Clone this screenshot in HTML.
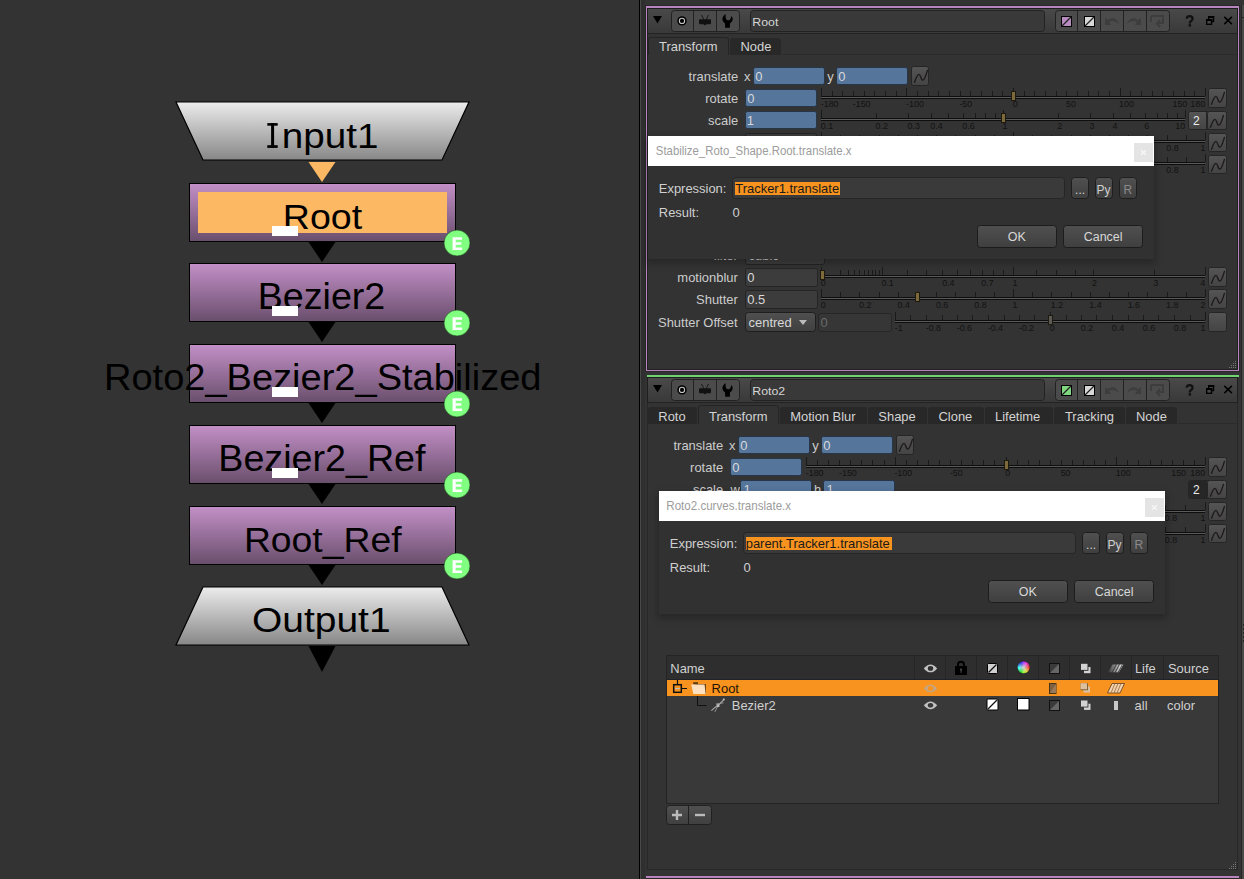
<!DOCTYPE html>
<html><head><meta charset="utf-8"><style>
html,body{margin:0;padding:0;background:#333;overflow:hidden;width:1244px;height:879px}
svg{display:block;font-family:"Liberation Sans",sans-serif}
</style></head><body>
<svg width="1244" height="879" viewBox="0 0 1244 879">
<defs>
<linearGradient id="gPurple" x1="0" y1="0" x2="0" y2="1">
<stop offset="0" stop-color="#c28fc6"/><stop offset="1" stop-color="#6a4f6d"/></linearGradient>
<linearGradient id="gGray" x1="0" y1="0" x2="0" y2="1">
<stop offset="0" stop-color="#ececec"/><stop offset="1" stop-color="#878787"/></linearGradient>
<linearGradient id="gHdr" x1="0" y1="0" x2="0" y2="1">
<stop offset="0" stop-color="#4a4a4a"/><stop offset="1" stop-color="#393939"/></linearGradient>
<linearGradient id="gBtn" x1="0" y1="0" x2="0" y2="1">
<stop offset="0" stop-color="#555"/><stop offset="1" stop-color="#444"/></linearGradient>
<linearGradient id="gBtn2" x1="0" y1="0" x2="0" y2="1">
<stop offset="0" stop-color="#505050"/><stop offset="1" stop-color="#3f3f3f"/></linearGradient>
<filter id="blur3" x="-5%" y="-15%" width="110%" height="130%"><feGaussianBlur stdDeviation="3.5"/></filter>
</defs>
<rect x="0" y="0" width="1244" height="879" fill="#333333" />
<polygon points="176,102 469,102 442,160 203,160" fill="url(#gGray)" stroke="#000" stroke-width="1.2"/>
<rect x="267.3" y="123.1" width="10.4" height="2.6" fill="#000" />
<rect x="271.1" y="123.1" width="3.0" height="24.8" fill="#000" />
<rect x="267.3" y="145.2" width="10.4" height="2.7" fill="#000" />
<text transform="translate(281.78,147.90) scale(1.0773,1)" font-size="35.90" fill="#000">nput1</text>
<polygon points="308.5,162 335.5,162 322,182" fill="#fdb863"/>
<rect x="189" y="183" width="267" height="59" fill="#000" />
<rect x="190" y="184" width="265" height="57" fill="url(#gPurple)" />
<rect x="198" y="192" width="249" height="41" fill="#fdb863" />
<rect x="189" y="263" width="267" height="59" fill="#000" />
<rect x="190" y="264" width="265" height="57" fill="url(#gPurple)" />
<rect x="189" y="344" width="267" height="59" fill="#000" />
<rect x="190" y="345" width="265" height="57" fill="url(#gPurple)" />
<rect x="189" y="425" width="267" height="59" fill="#000" />
<rect x="190" y="426" width="265" height="57" fill="url(#gPurple)" />
<rect x="189" y="506" width="267" height="59" fill="#000" />
<rect x="190" y="507" width="265" height="57" fill="url(#gPurple)" />
<text transform="translate(282.76,228.70) scale(1.0471,1)" font-size="35.90" fill="#000">Root</text>
<rect x="272" y="226" width="26" height="10" fill="#fff" />
<polygon points="308.5,242 335.5,242 322,262" fill="#000"/>
<circle cx="457" cy="243" r="13" fill="#80ff80" stroke="#1a3a1a" stroke-width="0.6"/>
<path d="M452.6,237.2 h9.4 v2.5 h-6.3 v2.6 h5.6 v2.4 h-5.6 v2.8 h6.4 v2.5 h-9.5 Z" fill="#fff"/>
<text transform="translate(257.66,308.60) scale(1.0321,1)" font-size="36.48" fill="#000">Bezier2</text>
<rect x="272" y="306" width="26" height="10" fill="#fff" />
<polygon points="308.5,322 335.5,322 322,342" fill="#000"/>
<circle cx="457" cy="323" r="13" fill="#80ff80" stroke="#1a3a1a" stroke-width="0.6"/>
<path d="M452.6,317.2 h9.4 v2.5 h-6.3 v2.6 h5.6 v2.4 h-5.6 v2.8 h6.4 v2.5 h-9.5 Z" fill="#fff"/>
<text transform="translate(104.03,390.40) scale(1.0341,1)" font-size="36.77" fill="#000">Roto2_Bezier2_Stabilized</text>
<rect x="272" y="387" width="26" height="10" fill="#fff" />
<polygon points="308.5,403 335.5,403 322,423" fill="#000"/>
<circle cx="457" cy="404" r="13" fill="#80ff80" stroke="#1a3a1a" stroke-width="0.6"/>
<path d="M452.6,398.2 h9.4 v2.5 h-6.3 v2.6 h5.6 v2.4 h-5.6 v2.8 h6.4 v2.5 h-9.5 Z" fill="#fff"/>
<text transform="translate(218.26,470.90) scale(1.0164,1)" font-size="37.06" fill="#000">Bezier2_Ref</text>
<rect x="272" y="468" width="26" height="10" fill="#fff" />
<polygon points="308.5,484 335.5,484 322,504" fill="#000"/>
<circle cx="457" cy="485" r="13" fill="#80ff80" stroke="#1a3a1a" stroke-width="0.6"/>
<path d="M452.6,479.2 h9.4 v2.5 h-6.3 v2.6 h5.6 v2.4 h-5.6 v2.8 h6.4 v2.5 h-9.5 Z" fill="#fff"/>
<text transform="translate(243.88,551.50) scale(1.0532,1)" font-size="35.47" fill="#000">Root_Ref</text>
<polygon points="308.5,565 335.5,565 322,585" fill="#000"/>
<circle cx="457" cy="566" r="13" fill="#80ff80" stroke="#1a3a1a" stroke-width="0.6"/>
<path d="M452.6,560.2 h9.4 v2.5 h-6.3 v2.6 h5.6 v2.4 h-5.6 v2.8 h6.4 v2.5 h-9.5 Z" fill="#fff"/>
<polygon points="203,587 442,587 469,645 176,645" fill="url(#gGray)" stroke="#000" stroke-width="1.2"/>
<text transform="translate(252.08,631.80) scale(1.0887,1)" font-size="35.76" fill="#000">Output1</text>
<polygon points="308.5,646 335.5,646 322,672" fill="#000"/>
<rect x="639" y="0" width="1" height="879" fill="#000" />
<rect x="640" y="0" width="1" height="879" fill="#494949" />
<rect x="641" y="0" width="4" height="879" fill="#2f2f2f" />
<rect x="1241" y="0" width="1" height="879" fill="#262626" />
<rect x="1242" y="0" width="2" height="879" fill="#4a4a4a" />
<rect x="1241" y="0" width="3" height="5" fill="#333333" />
<rect x="1242" y="17" width="2" height="1" fill="#262626" />
<rect x="1243" y="624" width="1" height="2" fill="#262626" />
<rect x="1243" y="628" width="1" height="2" fill="#262626" />
<rect x="1243" y="632" width="1" height="2" fill="#262626" />
<rect x="1243" y="636" width="1" height="2" fill="#262626" />
<rect x="1243" y="640" width="1" height="2" fill="#262626" />
<rect x="645" y="5" width="595" height="367" fill="#262726" />
<rect x="646" y="6" width="593" height="365" fill="#b784bf" />
<rect x="647" y="8" width="591" height="362" fill="#1f201f" />
<rect x="648" y="9" width="589" height="360" fill="#333333" />
<rect x="647" y="8" width="591" height="25" fill="url(#gHdr)" />
<rect x="647" y="8" width="591" height="1" fill="#1e1e1e" />
<rect x="647" y="33" width="591" height="1" fill="#232323" />
<polygon points="653,16 662,16 657.5,23.5" fill="#000"/>
<rect x="671.5" y="10.5" width="68" height="21" rx="3" fill="#4b4b4b" stroke="#222" stroke-width="1"/>
<rect x="693" y="11" width="1" height="20" fill="#222" />
<rect x="716" y="11" width="1" height="20" fill="#222" />
<circle cx="682" cy="20.9" r="4.7" fill="#000"/><circle cx="682" cy="20.9" r="2.6" fill="none" stroke="#c4c4c4" stroke-width="1.1"/>
<rect x="699" y="19.3" width="12" height="5" rx="1" fill="#111"/><path d="M701.5,15 L703.8,19.5 M708.5,15 L706.2,19.5" stroke="#111" stroke-width="0.9"/><polygon points="703.5,24 706.5,24 705,25.5" fill="#111"/>
<path d="M725.5,14.1 C723.5,15.5 722,18 722.5,20 C723,22 724.5,23 725.1,23.5 L725.1,27.8 L729.9,27.8 L729.9,23.5 C731,22.5 732.8,21 732.7,19 C732.6,17.5 732,16.5 731.3,16.2 L730.8,18 C730.5,19.5 729.5,20.3 728,20.3 C726.5,20.3 725.8,19 725.7,17.5 Z" fill="#000"/>
<rect x="750.5" y="10.5" width="294" height="21" rx="3" fill="#393939" stroke="#222222" stroke-width="1"/>
<text transform="translate(752.34,25.60) scale(1.1000,1)" font-size="11.20" fill="#d6d6d6">Root</text>
<rect x="1055.5" y="10.5" width="114" height="21" rx="3" fill="#4b4b4b" stroke="#222" stroke-width="1"/>
<rect x="1077" y="11" width="1" height="20" fill="#222" />
<rect x="1100" y="11" width="1" height="20" fill="#222" />
<rect x="1123" y="11" width="1" height="20" fill="#222" />
<rect x="1146" y="11" width="1" height="20" fill="#222" />
<rect x="1061.5" y="16.5" width="10" height="10" fill="#b78ac0" stroke="#000" stroke-width="1"/><path d="M1062,26 L1071,17" stroke="#222" stroke-width="1.2"/>
<rect x="1084.5" y="16.5" width="10" height="10" fill="#d8d8d8" stroke="#000" stroke-width="1"/><path d="M1085,26 L1094,17" stroke="#222" stroke-width="1.2"/>
<path d="M1105,25 L1105,18 L1108,20 C1112,17 1117,18 1119,24 C1116,21 1112,20 1109,22 L1111,25 Z" fill="#3d3d3d"/>
<path d="M1141,25 L1141,18 L1138,20 C1134,17 1129,18 1127,24 C1130,21 1134,20 1137,22 L1135,25 Z" fill="#3d3d3d"/>
<path d="M1151,16 L1163,16 L1163,23 L1158,23 M1160,20 L1157,23.5 L1160,27 M1151,16 L1151,22" fill="none" stroke="#3d3d3d" stroke-width="2"/>
<path d="M1186.6,18.6 C1187,16.6 1188.5,16.2 1189.6,16.2 C1191.6,16.2 1192.6,17.4 1192.6,18.8 C1192.6,20.4 1191.2,21 1190.4,21.8 C1189.9,22.3 1189.8,22.8 1189.8,23.4" fill="none" stroke="#111" stroke-width="2.2"/><rect x="1188.6" y="24.2" width="2.5" height="2.4" fill="#111"/>
<rect x="1208.7" y="16.7" width="4.8" height="4.8" fill="none" stroke="#000" stroke-width="1.4"/><rect x="1208" y="16" width="6.2" height="2" fill="#000"/><rect x="1206.7" y="19.7" width="4.8" height="4.6" fill="#474747" stroke="#000" stroke-width="1.4"/><rect x="1206" y="19" width="6.2" height="2" fill="#000"/>
<path d="M1224.3,16.9 L1231.9,24.1 M1231.9,16.9 L1224.3,24.1" stroke="#000" stroke-width="1.5"/>
<rect x="647" y="8" width="1" height="26" fill="#1e1e1e" />
<rect x="1237" y="8" width="1" height="26" fill="#1e1e1e" />
<path d="M648,55 L648,40 Q648,37 651,37 L726,37 Q729,37 729,40 L729,55 Z" fill="#333333"/>
<path d="M648.5,55 L648.5,40 Q648.5,37.5 651,37.5 L726,37.5 Q728.5,37.5 728.5,40 L728.5,55" fill="none" stroke="#242424" stroke-width="1"/>
<text transform="translate(659.00,50.80) scale(1.0800,1)" font-size="12.00" fill="#d4d4d4">Transform</text>
<path d="M730,55 L730,41 Q730,38 733,38 L778,38 Q781,38 781,41 L781,55 Z" fill="#282828"/>
<text transform="translate(740.49,51.00) scale(1.0800,1)" font-size="12.00" fill="#d4d4d4">Node</text>
<rect x="782" y="54" width="455" height="1" fill="#2b2b2b" />
<text transform="translate(688.62,81.40) scale(1.0800,1)" font-size="12.00" fill="#cccccc">translate</text>
<text transform="translate(744.00,81.40) scale(1.0800,1)" font-size="12.00" fill="#cccccc">x</text>
<rect x="753.5" y="67.5" width="71" height="17" rx="2" fill="#55759b" stroke="#263547" stroke-width="1"/>
<text transform="translate(755.20,81.00) scale(1.0800,1)" font-size="12.00" fill="#d8d8d8">0</text>
<text transform="translate(827.20,81.40) scale(1.0800,1)" font-size="12.00" fill="#cccccc">y</text>
<rect x="836.5" y="67.5" width="71" height="17" rx="2" fill="#55759b" stroke="#263547" stroke-width="1"/>
<text transform="translate(838.20,81.00) scale(1.0800,1)" font-size="12.00" fill="#d8d8d8">0</text>
<rect x="911.5" y="66.5" width="17" height="19" rx="2" fill="url(#gBtn)" stroke="#252525" stroke-width="1"/>
<path d="M914.5,82.2 C916,78 917.3,74.4 919,74.4 C920.8,74.4 921,80.2 922.6,80.2 C924.8,80.2 926.2,74.5 927.4,70.4" fill="none" stroke="#1e1a1a" stroke-width="1.4" stroke-linecap="round"/>
<text transform="translate(705.18,103.40) scale(1.0800,1)" font-size="12.00" fill="#cccccc">rotate</text>
<rect x="745.5" y="89.5" width="71" height="17" rx="2" fill="#55759b" stroke="#263547" stroke-width="1"/>
<text transform="translate(747.20,103.00) scale(1.0800,1)" font-size="12.00" fill="#d8d8d8">0</text>
<rect x="821" y="96" width="384" height="1" fill="#0e0e0e" />
<rect x="821" y="97" width="384" height="1" fill="#5a5a5a" />
<rect x="821" y="98" width="384" height="1" fill="#0e0e0e" />
<rect x="821" y="91" width="1" height="5" fill="#1a1a1a" />
<rect x="832" y="91" width="1" height="5" fill="#1a1a1a" />
<rect x="842" y="91" width="1" height="5" fill="#1a1a1a" />
<rect x="853" y="91" width="1" height="5" fill="#1a1a1a" />
<rect x="864" y="91" width="1" height="5" fill="#1a1a1a" />
<rect x="874" y="91" width="1" height="5" fill="#1a1a1a" />
<rect x="885" y="91" width="1" height="5" fill="#1a1a1a" />
<rect x="896" y="91" width="1" height="5" fill="#1a1a1a" />
<rect x="906" y="91" width="1" height="5" fill="#1a1a1a" />
<rect x="917" y="91" width="1" height="5" fill="#1a1a1a" />
<rect x="928" y="91" width="1" height="5" fill="#1a1a1a" />
<rect x="938" y="91" width="1" height="5" fill="#1a1a1a" />
<rect x="949" y="91" width="1" height="5" fill="#1a1a1a" />
<rect x="960" y="91" width="1" height="5" fill="#1a1a1a" />
<rect x="970" y="91" width="1" height="5" fill="#1a1a1a" />
<rect x="981" y="91" width="1" height="5" fill="#1a1a1a" />
<rect x="992" y="91" width="1" height="5" fill="#1a1a1a" />
<rect x="1002" y="91" width="1" height="5" fill="#1a1a1a" />
<rect x="1013" y="91" width="1" height="5" fill="#1a1a1a" />
<rect x="1024" y="91" width="1" height="5" fill="#1a1a1a" />
<rect x="1034" y="91" width="1" height="5" fill="#1a1a1a" />
<rect x="1045" y="91" width="1" height="5" fill="#1a1a1a" />
<rect x="1056" y="91" width="1" height="5" fill="#1a1a1a" />
<rect x="1066" y="91" width="1" height="5" fill="#1a1a1a" />
<rect x="1077" y="91" width="1" height="5" fill="#1a1a1a" />
<rect x="1088" y="91" width="1" height="5" fill="#1a1a1a" />
<rect x="1098" y="91" width="1" height="5" fill="#1a1a1a" />
<rect x="1109" y="91" width="1" height="5" fill="#1a1a1a" />
<rect x="1120" y="91" width="1" height="5" fill="#1a1a1a" />
<rect x="1130" y="91" width="1" height="5" fill="#1a1a1a" />
<rect x="1141" y="91" width="1" height="5" fill="#1a1a1a" />
<rect x="1152" y="91" width="1" height="5" fill="#1a1a1a" />
<rect x="1162" y="91" width="1" height="5" fill="#1a1a1a" />
<rect x="1173" y="91" width="1" height="5" fill="#1a1a1a" />
<rect x="1184" y="91" width="1" height="5" fill="#1a1a1a" />
<rect x="1194" y="91" width="1" height="5" fill="#1a1a1a" />
<rect x="1205" y="91" width="1" height="5" fill="#1a1a1a" />
<rect x="821" y="88" width="1" height="8" fill="#1a1a1a" />
<rect x="906" y="88" width="1" height="8" fill="#1a1a1a" />
<rect x="1013" y="88" width="1" height="8" fill="#1a1a1a" />
<rect x="1120" y="88" width="1" height="8" fill="#1a1a1a" />
<rect x="1205" y="88" width="1" height="8" fill="#1a1a1a" />
<text transform="translate(820.72,107.00) scale(1.0500,1)" font-size="8.50" fill="#121212">-180</text>
<text transform="translate(852.72,107.00) scale(1.0500,1)" font-size="8.50" fill="#121212">-150</text>
<text transform="translate(906.05,107.00) scale(1.0500,1)" font-size="8.50" fill="#121212">-100</text>
<text transform="translate(959.39,107.00) scale(1.0500,1)" font-size="8.50" fill="#121212">-50</text>
<text transform="translate(1012.72,107.00) scale(1.0500,1)" font-size="8.50" fill="#121212">0</text>
<text transform="translate(1066.05,107.00) scale(1.0500,1)" font-size="8.50" fill="#121212">50</text>
<text transform="translate(1119.11,107.00) scale(1.0500,1)" font-size="8.50" fill="#121212">100</text>
<text transform="translate(1172.44,107.00) scale(1.0500,1)" font-size="8.50" fill="#121212">150</text>
<text transform="translate(1190.33,107.00) scale(1.0500,1)" font-size="8.50" fill="#121212">180</text>
<rect x="1011.5" y="91.5" width="4" height="9" fill="#7d6a3a" stroke="#1e1a10" stroke-width="1"/>
<rect x="1208.5" y="88.5" width="18" height="19" rx="2" fill="url(#gBtn)" stroke="#252525" stroke-width="1"/>
<path d="M1211.5,104.2 C1213,100 1214.3,96.4 1216,96.4 C1217.8,96.4 1218,102.2 1219.6,102.2 C1221.8,102.2 1223.2,96.5 1224.4,92.4" fill="none" stroke="#1e1a1a" stroke-width="1.4" stroke-linecap="round"/>
<text transform="translate(708.07,125.40) scale(1.0800,1)" font-size="12.00" fill="#cccccc">scale</text>
<rect x="745.5" y="111.5" width="71" height="17" rx="2" fill="#55759b" stroke="#263547" stroke-width="1"/>
<text transform="translate(746.79,125.00) scale(1.0800,1)" font-size="12.00" fill="#d8d8d8">1</text>
<rect x="821" y="118" width="364" height="1" fill="#0e0e0e" />
<rect x="821" y="119" width="364" height="1" fill="#5a5a5a" />
<rect x="821" y="120" width="364" height="1" fill="#0e0e0e" />
<rect x="821" y="113" width="1" height="5" fill="#1a1a1a" />
<rect x="876" y="113" width="1" height="5" fill="#1a1a1a" />
<rect x="908" y="113" width="1" height="5" fill="#1a1a1a" />
<rect x="931" y="113" width="1" height="5" fill="#1a1a1a" />
<rect x="948" y="113" width="1" height="5" fill="#1a1a1a" />
<rect x="963" y="113" width="1" height="5" fill="#1a1a1a" />
<rect x="975" y="113" width="1" height="5" fill="#1a1a1a" />
<rect x="985" y="113" width="1" height="5" fill="#1a1a1a" />
<rect x="995" y="113" width="1" height="5" fill="#1a1a1a" />
<rect x="1003" y="113" width="1" height="5" fill="#1a1a1a" />
<rect x="1058" y="113" width="1" height="5" fill="#1a1a1a" />
<rect x="1090" y="113" width="1" height="5" fill="#1a1a1a" />
<rect x="1113" y="113" width="1" height="5" fill="#1a1a1a" />
<rect x="1130" y="113" width="1" height="5" fill="#1a1a1a" />
<rect x="1145" y="113" width="1" height="5" fill="#1a1a1a" />
<rect x="1157" y="113" width="1" height="5" fill="#1a1a1a" />
<rect x="1167" y="113" width="1" height="5" fill="#1a1a1a" />
<rect x="1177" y="113" width="1" height="5" fill="#1a1a1a" />
<rect x="1185" y="113" width="1" height="5" fill="#1a1a1a" />
<rect x="821" y="110" width="1" height="8" fill="#1a1a1a" />
<rect x="1003" y="110" width="1" height="8" fill="#1a1a1a" />
<rect x="1185" y="110" width="1" height="8" fill="#1a1a1a" />
<text transform="translate(820.72,129.00) scale(1.0500,1)" font-size="8.50" fill="#121212">0.1</text>
<text transform="translate(875.51,129.00) scale(1.0500,1)" font-size="8.50" fill="#121212">0.2</text>
<text transform="translate(907.56,129.00) scale(1.0500,1)" font-size="8.50" fill="#121212">0.3</text>
<text transform="translate(930.30,129.00) scale(1.0500,1)" font-size="8.50" fill="#121212">0.4</text>
<text transform="translate(962.34,129.00) scale(1.0500,1)" font-size="8.50" fill="#121212">0.6</text>
<text transform="translate(1002.44,129.00) scale(1.0500,1)" font-size="8.50" fill="#121212">1</text>
<text transform="translate(1057.37,129.00) scale(1.0500,1)" font-size="8.50" fill="#121212">2</text>
<text transform="translate(1089.56,129.00) scale(1.0500,1)" font-size="8.50" fill="#121212">3</text>
<text transform="translate(1112.44,129.00) scale(1.0500,1)" font-size="8.50" fill="#121212">4</text>
<text transform="translate(1144.21,129.00) scale(1.0500,1)" font-size="8.50" fill="#121212">6</text>
<text transform="translate(1175.29,129.00) scale(1.0500,1)" font-size="8.50" fill="#121212">10</text>
<rect x="1001.5" y="113.5" width="4" height="9" fill="#7d6a3a" stroke="#1e1a10" stroke-width="1"/>
<rect x="1188.5" y="111.5" width="38" height="18" rx="2" fill="url(#gBtn)" stroke="#252525" stroke-width="1"/>
<rect x="1206" y="112" width="1" height="17" fill="#252525" />
<text transform="translate(1193.04,125.20)" font-size="12.00" fill="#eeeeee">2</text>
<rect x="1207.5" y="111.5" width="19" height="18" rx="2" fill="url(#gBtn)" stroke="#252525" stroke-width="1"/>
<path d="M1210.5,127.2 C1212,123 1213.3,119.4 1215,119.4 C1216.8,119.4 1217,125.2 1218.6,125.2 C1220.8,125.2 1222.2,119.5 1223.4,115.4" fill="none" stroke="#1e1a1a" stroke-width="1.4" stroke-linecap="round"/>
<rect x="745.5" y="133.5" width="71" height="17" rx="2" fill="#3c3c3c" stroke="#242424" stroke-width="1"/>
<rect x="821" y="140" width="384" height="1" fill="#0e0e0e" />
<rect x="821" y="141" width="384" height="1" fill="#5a5a5a" />
<rect x="821" y="142" width="384" height="1" fill="#0e0e0e" />
<rect x="821" y="135" width="1" height="5" fill="#1a1a1a" />
<rect x="840" y="135" width="1" height="5" fill="#1a1a1a" />
<rect x="859" y="135" width="1" height="5" fill="#1a1a1a" />
<rect x="879" y="135" width="1" height="5" fill="#1a1a1a" />
<rect x="898" y="135" width="1" height="5" fill="#1a1a1a" />
<rect x="917" y="135" width="1" height="5" fill="#1a1a1a" />
<rect x="936" y="135" width="1" height="5" fill="#1a1a1a" />
<rect x="955" y="135" width="1" height="5" fill="#1a1a1a" />
<rect x="975" y="135" width="1" height="5" fill="#1a1a1a" />
<rect x="994" y="135" width="1" height="5" fill="#1a1a1a" />
<rect x="1013" y="135" width="1" height="5" fill="#1a1a1a" />
<rect x="1032" y="135" width="1" height="5" fill="#1a1a1a" />
<rect x="1051" y="135" width="1" height="5" fill="#1a1a1a" />
<rect x="1071" y="135" width="1" height="5" fill="#1a1a1a" />
<rect x="1090" y="135" width="1" height="5" fill="#1a1a1a" />
<rect x="1109" y="135" width="1" height="5" fill="#1a1a1a" />
<rect x="1128" y="135" width="1" height="5" fill="#1a1a1a" />
<rect x="1147" y="135" width="1" height="5" fill="#1a1a1a" />
<rect x="1167" y="135" width="1" height="5" fill="#1a1a1a" />
<rect x="1186" y="135" width="1" height="5" fill="#1a1a1a" />
<rect x="1205" y="135" width="1" height="5" fill="#1a1a1a" />
<rect x="821" y="132" width="1" height="8" fill="#1a1a1a" />
<rect x="1013" y="132" width="1" height="8" fill="#1a1a1a" />
<rect x="1205" y="132" width="1" height="8" fill="#1a1a1a" />
<text transform="translate(1166.32,151.00) scale(1.0500,1)" font-size="8.50" fill="#121212">0.8</text>
<text transform="translate(1200.40,151.00) scale(1.0500,1)" font-size="8.50" fill="#121212">1</text>
<rect x="1208.5" y="133.5" width="18" height="18" rx="2" fill="url(#gBtn)" stroke="#252525" stroke-width="1"/>
<path d="M1211.5,149.2 C1213,145 1214.3,141.4 1216,141.4 C1217.8,141.4 1218,147.2 1219.6,147.2 C1221.8,147.2 1223.2,141.5 1224.4,137.4" fill="none" stroke="#1e1a1a" stroke-width="1.4" stroke-linecap="round"/>
<rect x="821" y="162" width="384" height="1" fill="#0e0e0e" />
<rect x="821" y="163" width="384" height="1" fill="#5a5a5a" />
<rect x="821" y="164" width="384" height="1" fill="#0e0e0e" />
<rect x="821" y="157" width="1" height="5" fill="#1a1a1a" />
<rect x="840" y="157" width="1" height="5" fill="#1a1a1a" />
<rect x="859" y="157" width="1" height="5" fill="#1a1a1a" />
<rect x="879" y="157" width="1" height="5" fill="#1a1a1a" />
<rect x="898" y="157" width="1" height="5" fill="#1a1a1a" />
<rect x="917" y="157" width="1" height="5" fill="#1a1a1a" />
<rect x="936" y="157" width="1" height="5" fill="#1a1a1a" />
<rect x="955" y="157" width="1" height="5" fill="#1a1a1a" />
<rect x="975" y="157" width="1" height="5" fill="#1a1a1a" />
<rect x="994" y="157" width="1" height="5" fill="#1a1a1a" />
<rect x="1013" y="157" width="1" height="5" fill="#1a1a1a" />
<rect x="1032" y="157" width="1" height="5" fill="#1a1a1a" />
<rect x="1051" y="157" width="1" height="5" fill="#1a1a1a" />
<rect x="1071" y="157" width="1" height="5" fill="#1a1a1a" />
<rect x="1090" y="157" width="1" height="5" fill="#1a1a1a" />
<rect x="1109" y="157" width="1" height="5" fill="#1a1a1a" />
<rect x="1128" y="157" width="1" height="5" fill="#1a1a1a" />
<rect x="1147" y="157" width="1" height="5" fill="#1a1a1a" />
<rect x="1167" y="157" width="1" height="5" fill="#1a1a1a" />
<rect x="1186" y="157" width="1" height="5" fill="#1a1a1a" />
<rect x="1205" y="157" width="1" height="5" fill="#1a1a1a" />
<rect x="821" y="154" width="1" height="8" fill="#1a1a1a" />
<rect x="1013" y="154" width="1" height="8" fill="#1a1a1a" />
<rect x="1205" y="154" width="1" height="8" fill="#1a1a1a" />
<text transform="translate(1166.32,173.00) scale(1.0500,1)" font-size="8.50" fill="#121212">0.8</text>
<text transform="translate(1200.40,173.00) scale(1.0500,1)" font-size="8.50" fill="#121212">1</text>
<rect x="1208.5" y="155.5" width="18" height="18" rx="2" fill="url(#gBtn)" stroke="#252525" stroke-width="1"/>
<path d="M1211.5,171.2 C1213,167 1214.3,163.4 1216,163.4 C1217.8,163.4 1218,169.2 1219.6,169.2 C1221.8,169.2 1223.2,163.5 1224.4,159.4" fill="none" stroke="#1e1a1a" stroke-width="1.4" stroke-linecap="round"/>
<rect x="745.5" y="245.5" width="79" height="19" rx="2" fill="#3c3c3c" stroke="#242424" stroke-width="1"/>
<text transform="translate(748.60,259.80) scale(1.0800,1)" font-size="12.00" fill="#cfcfcf">cubic</text>
<text transform="translate(713.38,259.80) scale(1.0800,1)" font-size="12.00" fill="#cccccc">filter</text>
<text transform="translate(677.35,282.40) scale(1.0800,1)" font-size="12.00" fill="#cccccc">motionblur</text>
<rect x="745.5" y="268.5" width="72" height="18" rx="2" fill="#3c3c3c" stroke="#242424" stroke-width="1"/>
<text transform="translate(747.20,282.20) scale(1.0800,1)" font-size="12.00" fill="#d8d8d8">0</text>
<rect x="821" y="275" width="384" height="1" fill="#0e0e0e" />
<rect x="821" y="276" width="384" height="1" fill="#5a5a5a" />
<rect x="821" y="277" width="384" height="1" fill="#0e0e0e" />
<rect x="821" y="270" width="1" height="5" fill="#1a1a1a" />
<rect x="840" y="270" width="1" height="5" fill="#1a1a1a" />
<rect x="848" y="270" width="1" height="5" fill="#1a1a1a" />
<rect x="854" y="270" width="1" height="5" fill="#1a1a1a" />
<rect x="859" y="270" width="1" height="5" fill="#1a1a1a" />
<rect x="864" y="270" width="1" height="5" fill="#1a1a1a" />
<rect x="868" y="270" width="1" height="5" fill="#1a1a1a" />
<rect x="872" y="270" width="1" height="5" fill="#1a1a1a" />
<rect x="875" y="270" width="1" height="5" fill="#1a1a1a" />
<rect x="879" y="270" width="1" height="5" fill="#1a1a1a" />
<rect x="882" y="270" width="1" height="5" fill="#1a1a1a" />
<rect x="882" y="270" width="1" height="5" fill="#1a1a1a" />
<rect x="907" y="270" width="1" height="5" fill="#1a1a1a" />
<rect x="926" y="270" width="1" height="5" fill="#1a1a1a" />
<rect x="942" y="270" width="1" height="5" fill="#1a1a1a" />
<rect x="957" y="270" width="1" height="5" fill="#1a1a1a" />
<rect x="970" y="270" width="1" height="5" fill="#1a1a1a" />
<rect x="982" y="270" width="1" height="5" fill="#1a1a1a" />
<rect x="993" y="270" width="1" height="5" fill="#1a1a1a" />
<rect x="1003" y="270" width="1" height="5" fill="#1a1a1a" />
<rect x="1013" y="270" width="1" height="5" fill="#1a1a1a" />
<rect x="1036" y="270" width="1" height="5" fill="#1a1a1a" />
<rect x="1056" y="270" width="1" height="5" fill="#1a1a1a" />
<rect x="1075" y="270" width="1" height="5" fill="#1a1a1a" />
<rect x="1093" y="270" width="1" height="5" fill="#1a1a1a" />
<rect x="1154" y="270" width="1" height="5" fill="#1a1a1a" />
<rect x="1205" y="270" width="1" height="5" fill="#1a1a1a" />
<rect x="821" y="267" width="1" height="8" fill="#1a1a1a" />
<rect x="882" y="267" width="1" height="8" fill="#1a1a1a" />
<rect x="1013" y="267" width="1" height="8" fill="#1a1a1a" />
<rect x="1205" y="267" width="1" height="8" fill="#1a1a1a" />
<text transform="translate(820.72,286.00) scale(1.0500,1)" font-size="8.50" fill="#121212">0</text>
<text transform="translate(881.44,286.00) scale(1.0500,1)" font-size="8.50" fill="#121212">0.1</text>
<text transform="translate(942.15,286.00) scale(1.0500,1)" font-size="8.50" fill="#121212">0.4</text>
<text transform="translate(981.36,286.00) scale(1.0500,1)" font-size="8.50" fill="#121212">0.7</text>
<text transform="translate(1012.44,286.00) scale(1.0500,1)" font-size="8.50" fill="#121212">1</text>
<text transform="translate(1092.11,286.00) scale(1.0500,1)" font-size="8.50" fill="#121212">2</text>
<text transform="translate(1153.27,286.00) scale(1.0500,1)" font-size="8.50" fill="#121212">3</text>
<text transform="translate(1200.26,286.00) scale(1.0500,1)" font-size="8.50" fill="#121212">4</text>
<rect x="820.5" y="270.5" width="4" height="9" fill="#7d6a3a" stroke="#1e1a10" stroke-width="1"/>
<rect x="1208.5" y="267.5" width="18" height="19" rx="2" fill="url(#gBtn)" stroke="#252525" stroke-width="1"/>
<path d="M1211.5,283.2 C1213,279 1214.3,275.4 1216,275.4 C1217.8,275.4 1218,281.2 1219.6,281.2 C1221.8,281.2 1223.2,275.5 1224.4,271.4" fill="none" stroke="#1e1a1a" stroke-width="1.4" stroke-linecap="round"/>
<text transform="translate(696.08,304.30) scale(1.0800,1)" font-size="12.00" fill="#cccccc">Shutter</text>
<rect x="745.5" y="290.5" width="72" height="18" rx="2" fill="#3c3c3c" stroke="#242424" stroke-width="1"/>
<text transform="translate(747.20,304.20) scale(1.0800,1)" font-size="12.00" fill="#d8d8d8">0.5</text>
<rect x="821" y="297" width="384" height="1" fill="#0e0e0e" />
<rect x="821" y="298" width="384" height="1" fill="#5a5a5a" />
<rect x="821" y="299" width="384" height="1" fill="#0e0e0e" />
<rect x="821" y="292" width="1" height="5" fill="#1a1a1a" />
<rect x="840" y="292" width="1" height="5" fill="#1a1a1a" />
<rect x="859" y="292" width="1" height="5" fill="#1a1a1a" />
<rect x="879" y="292" width="1" height="5" fill="#1a1a1a" />
<rect x="898" y="292" width="1" height="5" fill="#1a1a1a" />
<rect x="917" y="292" width="1" height="5" fill="#1a1a1a" />
<rect x="936" y="292" width="1" height="5" fill="#1a1a1a" />
<rect x="955" y="292" width="1" height="5" fill="#1a1a1a" />
<rect x="975" y="292" width="1" height="5" fill="#1a1a1a" />
<rect x="994" y="292" width="1" height="5" fill="#1a1a1a" />
<rect x="1013" y="292" width="1" height="5" fill="#1a1a1a" />
<rect x="1032" y="292" width="1" height="5" fill="#1a1a1a" />
<rect x="1051" y="292" width="1" height="5" fill="#1a1a1a" />
<rect x="1071" y="292" width="1" height="5" fill="#1a1a1a" />
<rect x="1090" y="292" width="1" height="5" fill="#1a1a1a" />
<rect x="1109" y="292" width="1" height="5" fill="#1a1a1a" />
<rect x="1128" y="292" width="1" height="5" fill="#1a1a1a" />
<rect x="1147" y="292" width="1" height="5" fill="#1a1a1a" />
<rect x="1167" y="292" width="1" height="5" fill="#1a1a1a" />
<rect x="1186" y="292" width="1" height="5" fill="#1a1a1a" />
<rect x="1205" y="292" width="1" height="5" fill="#1a1a1a" />
<rect x="821" y="289" width="1" height="8" fill="#1a1a1a" />
<rect x="1013" y="289" width="1" height="8" fill="#1a1a1a" />
<rect x="1205" y="289" width="1" height="8" fill="#1a1a1a" />
<text transform="translate(820.72,308.00) scale(1.0500,1)" font-size="8.50" fill="#121212">0</text>
<text transform="translate(859.12,308.00) scale(1.0500,1)" font-size="8.50" fill="#121212">0.2</text>
<text transform="translate(897.52,308.00) scale(1.0500,1)" font-size="8.50" fill="#121212">0.4</text>
<text transform="translate(935.92,308.00) scale(1.0500,1)" font-size="8.50" fill="#121212">0.6</text>
<text transform="translate(974.32,308.00) scale(1.0500,1)" font-size="8.50" fill="#121212">0.8</text>
<text transform="translate(1012.44,308.00) scale(1.0500,1)" font-size="8.50" fill="#121212">1</text>
<text transform="translate(1050.84,308.00) scale(1.0500,1)" font-size="8.50" fill="#121212">1.2</text>
<text transform="translate(1089.24,308.00) scale(1.0500,1)" font-size="8.50" fill="#121212">1.4</text>
<text transform="translate(1127.64,308.00) scale(1.0500,1)" font-size="8.50" fill="#121212">1.6</text>
<text transform="translate(1166.04,308.00) scale(1.0500,1)" font-size="8.50" fill="#121212">1.8</text>
<text transform="translate(1200.40,308.00) scale(1.0500,1)" font-size="8.50" fill="#121212">2</text>
<rect x="915.5" y="292.5" width="4" height="9" fill="#7d6a3a" stroke="#1e1a10" stroke-width="1"/>
<rect x="1208.5" y="289.5" width="18" height="19" rx="2" fill="url(#gBtn)" stroke="#252525" stroke-width="1"/>
<path d="M1211.5,305.2 C1213,301 1214.3,297.4 1216,297.4 C1217.8,297.4 1218,303.2 1219.6,303.2 C1221.8,303.2 1223.2,297.5 1224.4,293.4" fill="none" stroke="#1e1a1a" stroke-width="1.4" stroke-linecap="round"/>
<text transform="translate(658.03,326.90) scale(1.0800,1)" font-size="12.00" fill="#cccccc">Shutter Offset</text>
<rect x="745.5" y="312.5" width="70" height="19" rx="3" fill="url(#gBtn2)" stroke="#1e1e1e" stroke-width="1"/>
<text transform="translate(748.60,326.70) scale(1.0800,1)" font-size="12.00" fill="#d8d8d8">centred</text>
<polygon points="799,320 807,320 803,325" fill="#bbbbbb"/>
<rect x="818.5" y="313.5" width="73" height="18" rx="2" fill="#363636" stroke="#262626" stroke-width="1"/>
<text transform="translate(820.60,326.70) scale(1.0800,1)" font-size="12.00" fill="#6a6a6a">0</text>
<rect x="895" y="320" width="310" height="1" fill="#0e0e0e" />
<rect x="895" y="321" width="310" height="1" fill="#5a5a5a" />
<rect x="895" y="322" width="310" height="1" fill="#0e0e0e" />
<rect x="895" y="315" width="1" height="5" fill="#1a1a1a" />
<rect x="910" y="315" width="1" height="5" fill="#1a1a1a" />
<rect x="926" y="315" width="1" height="5" fill="#1a1a1a" />
<rect x="942" y="315" width="1" height="5" fill="#1a1a1a" />
<rect x="957" y="315" width="1" height="5" fill="#1a1a1a" />
<rect x="972" y="315" width="1" height="5" fill="#1a1a1a" />
<rect x="988" y="315" width="1" height="5" fill="#1a1a1a" />
<rect x="1004" y="315" width="1" height="5" fill="#1a1a1a" />
<rect x="1019" y="315" width="1" height="5" fill="#1a1a1a" />
<rect x="1034" y="315" width="1" height="5" fill="#1a1a1a" />
<rect x="1050" y="315" width="1" height="5" fill="#1a1a1a" />
<rect x="1066" y="315" width="1" height="5" fill="#1a1a1a" />
<rect x="1081" y="315" width="1" height="5" fill="#1a1a1a" />
<rect x="1096" y="315" width="1" height="5" fill="#1a1a1a" />
<rect x="1112" y="315" width="1" height="5" fill="#1a1a1a" />
<rect x="1128" y="315" width="1" height="5" fill="#1a1a1a" />
<rect x="1143" y="315" width="1" height="5" fill="#1a1a1a" />
<rect x="1158" y="315" width="1" height="5" fill="#1a1a1a" />
<rect x="1174" y="315" width="1" height="5" fill="#1a1a1a" />
<rect x="1190" y="315" width="1" height="5" fill="#1a1a1a" />
<rect x="1205" y="315" width="1" height="5" fill="#1a1a1a" />
<rect x="895" y="312" width="1" height="8" fill="#1a1a1a" />
<rect x="1050" y="312" width="1" height="8" fill="#1a1a1a" />
<rect x="1205" y="312" width="1" height="8" fill="#1a1a1a" />
<text transform="translate(894.72,331.00) scale(1.0500,1)" font-size="8.50" fill="#121212">-1</text>
<text transform="translate(925.72,331.00) scale(1.0500,1)" font-size="8.50" fill="#121212">-0.8</text>
<text transform="translate(956.72,331.00) scale(1.0500,1)" font-size="8.50" fill="#121212">-0.6</text>
<text transform="translate(987.72,331.00) scale(1.0500,1)" font-size="8.50" fill="#121212">-0.4</text>
<text transform="translate(1018.72,331.00) scale(1.0500,1)" font-size="8.50" fill="#121212">-0.2</text>
<text transform="translate(1049.72,331.00) scale(1.0500,1)" font-size="8.50" fill="#121212">0</text>
<text transform="translate(1080.72,331.00) scale(1.0500,1)" font-size="8.50" fill="#121212">0.2</text>
<text transform="translate(1111.72,331.00) scale(1.0500,1)" font-size="8.50" fill="#121212">0.4</text>
<text transform="translate(1142.72,331.00) scale(1.0500,1)" font-size="8.50" fill="#121212">0.6</text>
<text transform="translate(1173.72,331.00) scale(1.0500,1)" font-size="8.50" fill="#121212">0.8</text>
<text transform="translate(1200.40,331.00) scale(1.0500,1)" font-size="8.50" fill="#121212">1</text>
<rect x="1048.5" y="315.5" width="4" height="9" fill="#5c5a54" stroke="#1e1a10" stroke-width="1"/>
<rect x="1208.5" y="312.5" width="18" height="19" rx="2" fill="url(#gBtn)" stroke="#252525" stroke-width="1"/>
<path d="M1236,360 L1236,368 L1228,368 Z" fill="none"/>
<rect x="1235" y="361" width="1" height="1" fill="#777" />
<rect x="1233" y="363" width="1" height="1" fill="#777" />
<rect x="1235" y="363" width="1" height="1" fill="#777" />
<rect x="1231" y="365" width="1" height="1" fill="#777" />
<rect x="1233" y="365" width="1" height="1" fill="#777" />
<rect x="1235" y="365" width="1" height="1" fill="#777" />
<rect x="1229" y="367" width="1" height="1" fill="#777" />
<rect x="1231" y="367" width="1" height="1" fill="#777" />
<rect x="1233" y="367" width="1" height="1" fill="#777" />
<rect x="1235" y="367" width="1" height="1" fill="#777" />
<rect x="646" y="138" width="510" height="126" fill="#000" opacity="0.22" filter="url(#blur3)"/>
<rect x="648" y="136" width="506" height="123" fill="#313131" />
<rect x="648" y="136" width="506" height="30" fill="#ffffff" />
<rect x="1134" y="143" width="19" height="19" fill="#e4e4e4" />
<path d="M1141,150.2 L1145.8,154.8 M1145.8,150.2 L1141,154.8" stroke="#f6f6f6" stroke-width="1.5"/>
<text transform="translate(655.84,154.80) scale(0.9500,1)" font-size="12.00" fill="#9c9c9c">Stabilize_Roto_Shape.Root.translate.x</text>
<text transform="translate(658.79,193.10) scale(1.0800,1)" font-size="12.00" fill="#d0d0d0">Expression:</text>
<rect x="732.5" y="177.5" width="332" height="21" rx="3" fill="#3a3a3a" stroke="#252525" stroke-width="1"/>
<rect x="735" y="182" width="105" height="13" fill="#f7931e" />
<text transform="translate(735.30,192.70) scale(1.0800,1)" font-size="12.00" fill="#1a1a1a">Tracker1.translate</text>
<text transform="translate(658.79,216.70) scale(1.0800,1)" font-size="12.00" fill="#d0d0d0">Result:</text>
<text transform="translate(732.60,216.70) scale(1.0800,1)" font-size="12.00" fill="#d0d0d0">0</text>
<rect x="1071.5" y="177.5" width="17" height="21" rx="3" fill="url(#gBtn2)" stroke="#1e1e1e" stroke-width="1"/>
<text transform="translate(1075.07,193.50)" font-size="12.00" fill="#d0d0d0">...</text>
<rect x="1095.5" y="177.5" width="17" height="21" rx="3" fill="url(#gBtn2)" stroke="#1e1e1e" stroke-width="1"/>
<text transform="translate(1096.53,193.50)" font-size="12.00" fill="#d0d0d0">Py</text>
<rect x="1119.5" y="177.5" width="17" height="21" rx="3" fill="url(#gBtn2)" stroke="#1e1e1e" stroke-width="1"/>
<text transform="translate(1123.41,193.50)" font-size="12.00" fill="#8a8a8a">R</text>
<rect x="977.5" y="225.5" width="79" height="22" rx="3" fill="url(#gBtn2)" stroke="#1c1c1c" stroke-width="1"/>
<text transform="translate(1007.76,241.10) scale(1.0400,1)" font-size="12.00" fill="#d8d8d8">OK</text>
<rect x="1063.5" y="225.5" width="79" height="22" rx="3" fill="url(#gBtn2)" stroke="#1c1c1c" stroke-width="1"/>
<text transform="translate(1083.69,241.10) scale(1.0400,1)" font-size="12.00" fill="#d8d8d8">Cancel</text>
<rect x="647" y="375" width="592" height="2" fill="#6fd36f" />
<rect x="647" y="377" width="1" height="493" fill="#282828" />
<rect x="1237" y="377" width="1" height="493" fill="#282828" />
<rect x="647" y="869" width="591" height="1" fill="#282828" />
<rect x="648" y="377" width="589" height="25" fill="url(#gHdr)" />
<rect x="648" y="377" width="589" height="1" fill="#1e1e1e" />
<rect x="648" y="402" width="589" height="1" fill="#232323" />
<polygon points="653,385 662,385 657.5,392.5" fill="#000"/>
<rect x="671.5" y="379.5" width="68" height="21" rx="3" fill="#4b4b4b" stroke="#222" stroke-width="1"/>
<rect x="693" y="380" width="1" height="20" fill="#222" />
<rect x="716" y="380" width="1" height="20" fill="#222" />
<circle cx="682" cy="389.9" r="4.7" fill="#000"/><circle cx="682" cy="389.9" r="2.6" fill="none" stroke="#c4c4c4" stroke-width="1.1"/>
<rect x="699" y="388.3" width="12" height="5" rx="1" fill="#111"/><path d="M701.5,384 L703.8,388.5 M708.5,384 L706.2,388.5" stroke="#111" stroke-width="0.9"/><polygon points="703.5,393 706.5,393 705,394.5" fill="#111"/>
<path d="M725.5,383.1 C723.5,384.5 722,387 722.5,389 C723,391 724.5,392 725.1,392.5 L725.1,396.8 L729.9,396.8 L729.9,392.5 C731,391.5 732.8,390 732.7,388 C732.6,386.5 732,385.5 731.3,385.2 L730.8,387 C730.5,388.5 729.5,389.3 728,389.3 C726.5,389.3 725.8,388 725.7,386.5 Z" fill="#000"/>
<rect x="750.5" y="379.5" width="294" height="21" rx="3" fill="#393939" stroke="#222222" stroke-width="1"/>
<text transform="translate(752.34,394.60) scale(1.1000,1)" font-size="11.20" fill="#d6d6d6">Roto2</text>
<rect x="1055.5" y="379.5" width="114" height="21" rx="3" fill="#4b4b4b" stroke="#222" stroke-width="1"/>
<rect x="1077" y="380" width="1" height="20" fill="#222" />
<rect x="1100" y="380" width="1" height="20" fill="#222" />
<rect x="1123" y="380" width="1" height="20" fill="#222" />
<rect x="1146" y="380" width="1" height="20" fill="#222" />
<rect x="1061.5" y="385.5" width="10" height="10" fill="#7fd87f" stroke="#000" stroke-width="1"/><path d="M1062,395 L1071,386" stroke="#222" stroke-width="1.2"/>
<rect x="1084.5" y="385.5" width="10" height="10" fill="#d8d8d8" stroke="#000" stroke-width="1"/><path d="M1085,395 L1094,386" stroke="#222" stroke-width="1.2"/>
<path d="M1105,394 L1105,387 L1108,389 C1112,386 1117,387 1119,393 C1116,390 1112,389 1109,391 L1111,394 Z" fill="#3d3d3d"/>
<path d="M1141,394 L1141,387 L1138,389 C1134,386 1129,387 1127,393 C1130,390 1134,389 1137,391 L1135,394 Z" fill="#3d3d3d"/>
<path d="M1151,385 L1163,385 L1163,392 L1158,392 M1160,389 L1157,392.5 L1160,396 M1151,385 L1151,391" fill="none" stroke="#3d3d3d" stroke-width="2"/>
<path d="M1186.6,387.6 C1187,385.6 1188.5,385.2 1189.6,385.2 C1191.6,385.2 1192.6,386.4 1192.6,387.8 C1192.6,389.4 1191.2,390 1190.4,390.8 C1189.9,391.3 1189.8,391.8 1189.8,392.4" fill="none" stroke="#111" stroke-width="2.2"/><rect x="1188.6" y="393.2" width="2.5" height="2.4" fill="#111"/>
<rect x="1208.7" y="385.7" width="4.8" height="4.8" fill="none" stroke="#000" stroke-width="1.4"/><rect x="1208" y="385" width="6.2" height="2" fill="#000"/><rect x="1206.7" y="388.7" width="4.8" height="4.6" fill="#474747" stroke="#000" stroke-width="1.4"/><rect x="1206" y="388" width="6.2" height="2" fill="#000"/>
<path d="M1224.3,385.9 L1231.9,393.1 M1231.9,385.9 L1224.3,393.1" stroke="#000" stroke-width="1.5"/>
<rect x="647" y="377" width="1" height="26" fill="#1e1e1e" />
<rect x="1237" y="377" width="1" height="26" fill="#1e1e1e" />
<path d="M648,424 L648,410 Q648,407 651,407 L694,407 Q697,407 697,410 L697,424 Z" fill="#282828"/>
<text transform="translate(658.29,420.60) scale(1.0800,1)" font-size="12.00" fill="#d4d4d4">Roto</text>
<path d="M698,424 L698,408 Q698,405 701,405 L776,405 Q779,405 779,408 L779,424 Z" fill="#333333"/>
<path d="M698.5,424 L698.5,408 Q698.5,405.5 701,405.5 L776,405.5 Q778.5,405.5 778.5,408 L778.5,424" fill="none" stroke="#242424" stroke-width="1"/>
<text transform="translate(709.00,420.60) scale(1.0800,1)" font-size="12.00" fill="#d4d4d4">Transform</text>
<path d="M780,424 L780,410 Q780,407 783,407 L864,407 Q867,407 867,410 L867,424 Z" fill="#282828"/>
<text transform="translate(790.19,420.60) scale(1.0800,1)" font-size="12.00" fill="#d4d4d4">Motion Blur</text>
<path d="M868,424 L868,410 Q868,407 871,407 L924,407 Q927,407 927,410 L927,424 Z" fill="#282828"/>
<text transform="translate(878.30,420.60) scale(1.0800,1)" font-size="12.00" fill="#d4d4d4">Shape</text>
<path d="M928,424 L928,410 Q928,407 931,407 L981,407 Q984,407 984,410 L984,424 Z" fill="#282828"/>
<text transform="translate(938.49,420.60) scale(1.0800,1)" font-size="12.00" fill="#d4d4d4">Clone</text>
<path d="M985,424 L985,410 Q985,407 988,407 L1050,407 Q1053,407 1053,410 L1053,424 Z" fill="#282828"/>
<text transform="translate(994.99,420.60) scale(1.0800,1)" font-size="12.00" fill="#d4d4d4">Lifetime</text>
<path d="M1054,424 L1054,410 Q1054,407 1057,407 L1122,407 Q1125,407 1125,410 L1125,424 Z" fill="#282828"/>
<text transform="translate(1064.90,420.60) scale(1.0800,1)" font-size="12.00" fill="#d4d4d4">Tracking</text>
<path d="M1126,424 L1126,410 Q1126,407 1129,407 L1174,407 Q1177,407 1177,410 L1177,424 Z" fill="#282828"/>
<text transform="translate(1135.99,420.60) scale(1.0800,1)" font-size="12.00" fill="#d4d4d4">Node</text>
<rect x="1178" y="423" width="59" height="1" fill="#2b2b2b" />
<text transform="translate(673.52,450.40) scale(1.0800,1)" font-size="12.00" fill="#cccccc">translate</text>
<text transform="translate(729.00,450.40) scale(1.0800,1)" font-size="12.00" fill="#cccccc">x</text>
<rect x="738.5" y="436.5" width="71" height="17" rx="2" fill="#55759b" stroke="#263547" stroke-width="1"/>
<text transform="translate(740.20,450.00) scale(1.0800,1)" font-size="12.00" fill="#d8d8d8">0</text>
<text transform="translate(812.20,450.40) scale(1.0800,1)" font-size="12.00" fill="#cccccc">y</text>
<rect x="821.5" y="436.5" width="71" height="17" rx="2" fill="#55759b" stroke="#263547" stroke-width="1"/>
<text transform="translate(823.20,450.00) scale(1.0800,1)" font-size="12.00" fill="#d8d8d8">0</text>
<rect x="896.5" y="435.5" width="17" height="19" rx="2" fill="url(#gBtn)" stroke="#252525" stroke-width="1"/>
<path d="M899.5,451.2 C901,447 902.3,443.4 904,443.4 C905.8,443.4 906,449.2 907.6,449.2 C909.8,449.2 911.2,443.5 912.4,439.4" fill="none" stroke="#1e1a1a" stroke-width="1.4" stroke-linecap="round"/>
<text transform="translate(690.08,472.40) scale(1.0800,1)" font-size="12.00" fill="#cccccc">rotate</text>
<rect x="730.5" y="458.5" width="71" height="17" rx="2" fill="#55759b" stroke="#263547" stroke-width="1"/>
<text transform="translate(732.20,472.00) scale(1.0800,1)" font-size="12.00" fill="#d8d8d8">0</text>
<rect x="806" y="465" width="399" height="1" fill="#0e0e0e" />
<rect x="806" y="466" width="399" height="1" fill="#5a5a5a" />
<rect x="806" y="467" width="399" height="1" fill="#0e0e0e" />
<rect x="806" y="460" width="1" height="5" fill="#1a1a1a" />
<rect x="817" y="460" width="1" height="5" fill="#1a1a1a" />
<rect x="828" y="460" width="1" height="5" fill="#1a1a1a" />
<rect x="839" y="460" width="1" height="5" fill="#1a1a1a" />
<rect x="850" y="460" width="1" height="5" fill="#1a1a1a" />
<rect x="861" y="460" width="1" height="5" fill="#1a1a1a" />
<rect x="872" y="460" width="1" height="5" fill="#1a1a1a" />
<rect x="884" y="460" width="1" height="5" fill="#1a1a1a" />
<rect x="895" y="460" width="1" height="5" fill="#1a1a1a" />
<rect x="906" y="460" width="1" height="5" fill="#1a1a1a" />
<rect x="917" y="460" width="1" height="5" fill="#1a1a1a" />
<rect x="928" y="460" width="1" height="5" fill="#1a1a1a" />
<rect x="939" y="460" width="1" height="5" fill="#1a1a1a" />
<rect x="950" y="460" width="1" height="5" fill="#1a1a1a" />
<rect x="961" y="460" width="1" height="5" fill="#1a1a1a" />
<rect x="972" y="460" width="1" height="5" fill="#1a1a1a" />
<rect x="983" y="460" width="1" height="5" fill="#1a1a1a" />
<rect x="994" y="460" width="1" height="5" fill="#1a1a1a" />
<rect x="1006" y="460" width="1" height="5" fill="#1a1a1a" />
<rect x="1017" y="460" width="1" height="5" fill="#1a1a1a" />
<rect x="1028" y="460" width="1" height="5" fill="#1a1a1a" />
<rect x="1039" y="460" width="1" height="5" fill="#1a1a1a" />
<rect x="1050" y="460" width="1" height="5" fill="#1a1a1a" />
<rect x="1061" y="460" width="1" height="5" fill="#1a1a1a" />
<rect x="1072" y="460" width="1" height="5" fill="#1a1a1a" />
<rect x="1083" y="460" width="1" height="5" fill="#1a1a1a" />
<rect x="1094" y="460" width="1" height="5" fill="#1a1a1a" />
<rect x="1105" y="460" width="1" height="5" fill="#1a1a1a" />
<rect x="1116" y="460" width="1" height="5" fill="#1a1a1a" />
<rect x="1127" y="460" width="1" height="5" fill="#1a1a1a" />
<rect x="1138" y="460" width="1" height="5" fill="#1a1a1a" />
<rect x="1150" y="460" width="1" height="5" fill="#1a1a1a" />
<rect x="1161" y="460" width="1" height="5" fill="#1a1a1a" />
<rect x="1172" y="460" width="1" height="5" fill="#1a1a1a" />
<rect x="1183" y="460" width="1" height="5" fill="#1a1a1a" />
<rect x="1194" y="460" width="1" height="5" fill="#1a1a1a" />
<rect x="1205" y="460" width="1" height="5" fill="#1a1a1a" />
<rect x="806" y="457" width="1" height="8" fill="#1a1a1a" />
<rect x="895" y="457" width="1" height="8" fill="#1a1a1a" />
<rect x="1006" y="457" width="1" height="8" fill="#1a1a1a" />
<rect x="1116" y="457" width="1" height="8" fill="#1a1a1a" />
<rect x="1205" y="457" width="1" height="8" fill="#1a1a1a" />
<text transform="translate(805.72,476.00) scale(1.0500,1)" font-size="8.50" fill="#121212">-180</text>
<text transform="translate(838.97,476.00) scale(1.0500,1)" font-size="8.50" fill="#121212">-150</text>
<text transform="translate(894.39,476.00) scale(1.0500,1)" font-size="8.50" fill="#121212">-100</text>
<text transform="translate(949.80,476.00) scale(1.0500,1)" font-size="8.50" fill="#121212">-50</text>
<text transform="translate(1005.22,476.00) scale(1.0500,1)" font-size="8.50" fill="#121212">0</text>
<text transform="translate(1060.64,476.00) scale(1.0500,1)" font-size="8.50" fill="#121212">50</text>
<text transform="translate(1115.78,476.00) scale(1.0500,1)" font-size="8.50" fill="#121212">100</text>
<text transform="translate(1171.19,476.00) scale(1.0500,1)" font-size="8.50" fill="#121212">150</text>
<text transform="translate(1190.33,476.00) scale(1.0500,1)" font-size="8.50" fill="#121212">180</text>
<rect x="1004.5" y="460.5" width="4" height="9" fill="#7d6a3a" stroke="#1e1a10" stroke-width="1"/>
<rect x="1208.5" y="457.5" width="18" height="19" rx="2" fill="url(#gBtn)" stroke="#252525" stroke-width="1"/>
<path d="M1211.5,473.2 C1213,469 1214.3,465.4 1216,465.4 C1217.8,465.4 1218,471.2 1219.6,471.2 C1221.8,471.2 1223.2,465.5 1224.4,461.4" fill="none" stroke="#1e1a1a" stroke-width="1.4" stroke-linecap="round"/>
<text transform="translate(692.97,494.40) scale(1.0800,1)" font-size="12.00" fill="#cccccc">scale</text>
<text transform="translate(730.60,494.40) scale(1.0800,1)" font-size="12.00" fill="#cccccc">w</text>
<rect x="740.5" y="480.5" width="71" height="17" rx="2" fill="#55759b" stroke="#263547" stroke-width="1"/>
<text transform="translate(743.39,494.00) scale(1.0800,1)" font-size="12.00" fill="#d8d8d8">1</text>
<text transform="translate(814.09,494.40) scale(1.0800,1)" font-size="12.00" fill="#cccccc">h</text>
<rect x="823.5" y="480.5" width="71" height="17" rx="2" fill="#55759b" stroke="#263547" stroke-width="1"/>
<text transform="translate(826.39,494.00) scale(1.0800,1)" font-size="12.00" fill="#d8d8d8">1</text>
<rect x="1188.5" y="480.5" width="38" height="18" rx="2" fill="url(#gBtn)" stroke="#252525" stroke-width="1"/>
<rect x="1189" y="481" width="17" height="17" fill="#262626"/>
<rect x="1206" y="481" width="1" height="17" fill="#252525" />
<text transform="translate(1193.04,494.20)" font-size="12.00" fill="#eeeeee">2</text>
<rect x="1207.5" y="480.5" width="19" height="18" rx="2" fill="url(#gBtn)" stroke="#252525" stroke-width="1"/>
<path d="M1210.5,496.2 C1212,492 1213.3,488.4 1215,488.4 C1216.8,488.4 1217,494.2 1218.6,494.2 C1220.8,494.2 1222.2,488.5 1223.4,484.4" fill="none" stroke="#1e1a1a" stroke-width="1.4" stroke-linecap="round"/>
<rect x="806" y="510" width="399" height="1" fill="#0e0e0e" />
<rect x="806" y="511" width="399" height="1" fill="#5a5a5a" />
<rect x="806" y="512" width="399" height="1" fill="#0e0e0e" />
<rect x="806" y="505" width="1" height="5" fill="#1a1a1a" />
<rect x="826" y="505" width="1" height="5" fill="#1a1a1a" />
<rect x="846" y="505" width="1" height="5" fill="#1a1a1a" />
<rect x="866" y="505" width="1" height="5" fill="#1a1a1a" />
<rect x="886" y="505" width="1" height="5" fill="#1a1a1a" />
<rect x="906" y="505" width="1" height="5" fill="#1a1a1a" />
<rect x="926" y="505" width="1" height="5" fill="#1a1a1a" />
<rect x="946" y="505" width="1" height="5" fill="#1a1a1a" />
<rect x="966" y="505" width="1" height="5" fill="#1a1a1a" />
<rect x="986" y="505" width="1" height="5" fill="#1a1a1a" />
<rect x="1006" y="505" width="1" height="5" fill="#1a1a1a" />
<rect x="1025" y="505" width="1" height="5" fill="#1a1a1a" />
<rect x="1045" y="505" width="1" height="5" fill="#1a1a1a" />
<rect x="1065" y="505" width="1" height="5" fill="#1a1a1a" />
<rect x="1085" y="505" width="1" height="5" fill="#1a1a1a" />
<rect x="1105" y="505" width="1" height="5" fill="#1a1a1a" />
<rect x="1125" y="505" width="1" height="5" fill="#1a1a1a" />
<rect x="1145" y="505" width="1" height="5" fill="#1a1a1a" />
<rect x="1165" y="505" width="1" height="5" fill="#1a1a1a" />
<rect x="1185" y="505" width="1" height="5" fill="#1a1a1a" />
<rect x="1205" y="505" width="1" height="5" fill="#1a1a1a" />
<rect x="806" y="502" width="1" height="8" fill="#1a1a1a" />
<rect x="1006" y="502" width="1" height="8" fill="#1a1a1a" />
<rect x="1205" y="502" width="1" height="8" fill="#1a1a1a" />
<text transform="translate(1164.82,521.00) scale(1.0500,1)" font-size="8.50" fill="#121212">0.8</text>
<text transform="translate(1200.40,521.00) scale(1.0500,1)" font-size="8.50" fill="#121212">1</text>
<rect x="1208.5" y="502.5" width="18" height="18" rx="2" fill="url(#gBtn)" stroke="#252525" stroke-width="1"/>
<path d="M1211.5,518.2 C1213,514 1214.3,510.4 1216,510.4 C1217.8,510.4 1218,516.2 1219.6,516.2 C1221.8,516.2 1223.2,510.5 1224.4,506.4" fill="none" stroke="#1e1a1a" stroke-width="1.4" stroke-linecap="round"/>
<rect x="806" y="532" width="399" height="1" fill="#0e0e0e" />
<rect x="806" y="533" width="399" height="1" fill="#5a5a5a" />
<rect x="806" y="534" width="399" height="1" fill="#0e0e0e" />
<rect x="806" y="527" width="1" height="5" fill="#1a1a1a" />
<rect x="826" y="527" width="1" height="5" fill="#1a1a1a" />
<rect x="846" y="527" width="1" height="5" fill="#1a1a1a" />
<rect x="866" y="527" width="1" height="5" fill="#1a1a1a" />
<rect x="886" y="527" width="1" height="5" fill="#1a1a1a" />
<rect x="906" y="527" width="1" height="5" fill="#1a1a1a" />
<rect x="926" y="527" width="1" height="5" fill="#1a1a1a" />
<rect x="946" y="527" width="1" height="5" fill="#1a1a1a" />
<rect x="966" y="527" width="1" height="5" fill="#1a1a1a" />
<rect x="986" y="527" width="1" height="5" fill="#1a1a1a" />
<rect x="1006" y="527" width="1" height="5" fill="#1a1a1a" />
<rect x="1025" y="527" width="1" height="5" fill="#1a1a1a" />
<rect x="1045" y="527" width="1" height="5" fill="#1a1a1a" />
<rect x="1065" y="527" width="1" height="5" fill="#1a1a1a" />
<rect x="1085" y="527" width="1" height="5" fill="#1a1a1a" />
<rect x="1105" y="527" width="1" height="5" fill="#1a1a1a" />
<rect x="1125" y="527" width="1" height="5" fill="#1a1a1a" />
<rect x="1145" y="527" width="1" height="5" fill="#1a1a1a" />
<rect x="1165" y="527" width="1" height="5" fill="#1a1a1a" />
<rect x="1185" y="527" width="1" height="5" fill="#1a1a1a" />
<rect x="1205" y="527" width="1" height="5" fill="#1a1a1a" />
<rect x="806" y="524" width="1" height="8" fill="#1a1a1a" />
<rect x="1006" y="524" width="1" height="8" fill="#1a1a1a" />
<rect x="1205" y="524" width="1" height="8" fill="#1a1a1a" />
<text transform="translate(1164.82,543.00) scale(1.0500,1)" font-size="8.50" fill="#121212">0.8</text>
<text transform="translate(1200.40,543.00) scale(1.0500,1)" font-size="8.50" fill="#121212">1</text>
<rect x="1208.5" y="524.5" width="18" height="18" rx="2" fill="url(#gBtn)" stroke="#252525" stroke-width="1"/>
<path d="M1211.5,540.2 C1213,536 1214.3,532.4 1216,532.4 C1217.8,532.4 1218,538.2 1219.6,538.2 C1221.8,538.2 1223.2,532.5 1224.4,528.4" fill="none" stroke="#1e1a1a" stroke-width="1.4" stroke-linecap="round"/>
<rect x="666" y="655" width="553" height="149" fill="#242424" />
<rect x="667" y="656" width="551" height="23" fill="#2e2e2e" />
<rect x="667" y="680" width="551" height="123" fill="#393939" />
<rect x="667" y="680" width="551" height="16" fill="#f7931e" />
<rect x="914" y="656" width="1" height="23" fill="#262626" />
<rect x="945" y="656" width="1" height="23" fill="#262626" />
<rect x="976" y="656" width="1" height="23" fill="#262626" />
<rect x="1007" y="656" width="1" height="23" fill="#262626" />
<rect x="1038" y="656" width="1" height="23" fill="#262626" />
<rect x="1069" y="656" width="1" height="23" fill="#262626" />
<rect x="1100" y="656" width="1" height="23" fill="#262626" />
<rect x="1131" y="656" width="1" height="23" fill="#262626" />
<rect x="1163" y="656" width="1" height="23" fill="#262626" />
<text transform="translate(670.29,673.20) scale(1.0800,1)" font-size="12.00" fill="#d0d0d0">Name</text>
<text transform="translate(1134.89,673.20) scale(1.0800,1)" font-size="12.00" fill="#d0d0d0">Life</text>
<text transform="translate(1167.89,673.20) scale(1.0800,1)" font-size="12.00" fill="#d0d0d0">Source</text>
<path d="M923.8,668.4 Q930.5,660.6 937.2,668.4 Q930.5,676.1999999999999 923.8,668.4 Z" fill="#c2c2c2"/><ellipse cx="930.5" cy="668.4" rx="2.7" ry="2.3" fill="#2e2e2e"/>
<path d="M958,666.5 L958,664.5 Q958,661.8 961,661.8 Q964,661.8 964,664.5 L964,666.5" fill="none" stroke="#000" stroke-width="2"/><rect x="955" y="666" width="12" height="9" fill="#000"/><circle cx="961" cy="669.6" r="1" fill="#555"/><rect x="960.6" y="670" width="0.9" height="2.8" fill="#555"/>
<rect x="987.5" y="663.5" width="10" height="10" fill="#d0d0d0" stroke="#000" stroke-width="1" rx="1"/><path d="M988.5,672.5 L996.5,664.5" stroke="#111" stroke-width="1.2"/>
<defs><radialGradient id="gWheel"><stop offset="0" stop-color="#ddd" stop-opacity="0.95"/><stop offset="1" stop-color="#ddd" stop-opacity="0"/></radialGradient></defs>
<g><path d="M1023.6,667.4 L1029.44,666.58 A5.9,5.9 0 0 1 1029.44,668.22 Z" fill="#ff2626"/><path d="M1023.6,667.4 L1029.46,668.12 A5.9,5.9 0 0 1 1029.03,669.71 Z" fill="#ff5c26"/><path d="M1023.6,667.4 L1029.07,669.61 A5.9,5.9 0 0 1 1028.25,671.03 Z" fill="#ff9226"/><path d="M1023.6,667.4 L1028.31,670.95 A5.9,5.9 0 0 1 1027.15,672.11 Z" fill="#ffc826"/><path d="M1023.6,667.4 L1027.23,672.05 A5.9,5.9 0 0 1 1025.81,672.87 Z" fill="#ffff26"/><path d="M1023.6,667.4 L1025.91,672.83 A5.9,5.9 0 0 1 1024.32,673.26 Z" fill="#c8ff26"/><path d="M1023.6,667.4 L1024.42,673.24 A5.9,5.9 0 0 1 1022.78,673.24 Z" fill="#92ff26"/><path d="M1023.6,667.4 L1022.88,673.26 A5.9,5.9 0 0 1 1021.29,672.83 Z" fill="#5cff26"/><path d="M1023.6,667.4 L1021.39,672.87 A5.9,5.9 0 0 1 1019.97,672.05 Z" fill="#26ff26"/><path d="M1023.6,667.4 L1020.05,672.11 A5.9,5.9 0 0 1 1018.89,670.95 Z" fill="#26ff5c"/><path d="M1023.6,667.4 L1018.95,671.03 A5.9,5.9 0 0 1 1018.13,669.61 Z" fill="#26ff92"/><path d="M1023.6,667.4 L1018.17,669.71 A5.9,5.9 0 0 1 1017.74,668.12 Z" fill="#26ffc8"/><path d="M1023.6,667.4 L1017.76,668.22 A5.9,5.9 0 0 1 1017.76,666.58 Z" fill="#26ffff"/><path d="M1023.6,667.4 L1017.74,666.68 A5.9,5.9 0 0 1 1018.17,665.09 Z" fill="#26c8ff"/><path d="M1023.6,667.4 L1018.13,665.19 A5.9,5.9 0 0 1 1018.95,663.77 Z" fill="#2692ff"/><path d="M1023.6,667.4 L1018.89,663.85 A5.9,5.9 0 0 1 1020.05,662.69 Z" fill="#265cff"/><path d="M1023.6,667.4 L1019.97,662.75 A5.9,5.9 0 0 1 1021.39,661.93 Z" fill="#2626ff"/><path d="M1023.6,667.4 L1021.29,661.97 A5.9,5.9 0 0 1 1022.88,661.54 Z" fill="#5c26ff"/><path d="M1023.6,667.4 L1022.78,661.56 A5.9,5.9 0 0 1 1024.42,661.56 Z" fill="#9226ff"/><path d="M1023.6,667.4 L1024.32,661.54 A5.9,5.9 0 0 1 1025.91,661.97 Z" fill="#c826ff"/><path d="M1023.6,667.4 L1025.81,661.93 A5.9,5.9 0 0 1 1027.23,662.75 Z" fill="#ff26ff"/><path d="M1023.6,667.4 L1027.15,662.69 A5.9,5.9 0 0 1 1028.31,663.85 Z" fill="#ff26c8"/><path d="M1023.6,667.4 L1028.25,663.77 A5.9,5.9 0 0 1 1029.07,665.19 Z" fill="#ff2692"/><path d="M1023.6,667.4 L1029.03,665.09 A5.9,5.9 0 0 1 1029.46,666.68 Z" fill="#ff265c"/><circle cx="1023.6" cy="667.4" r="5.9" fill="url(#gWheel)"/></g>
<rect x="1049.5" y="663.5" width="10" height="10" fill="#3a3a3a" stroke="#111" stroke-width="1"/><path d="M1050,673 L1059,664 L1059,673 Z" fill="#666"/>
<rect x="1084" y="667.0" width="6.5" height="6.2" fill="#d2d2d2"/><rect x="1081" y="663.8" width="7.4" height="7" fill="#2e2e2e"/><rect x="1081" y="663.8" width="6.5" height="6.1" fill="#d2d2d2"/>
<defs><linearGradient id="gStr" x1="0" y1="0" x2="1" y2="0"><stop offset="0" stop-color="#fff" stop-opacity="0"/><stop offset="1" stop-color="#fff"/></linearGradient></defs><path d="M1107.8,672.2 L1112.3,664.5 L1123.4,664.5 L1118.9,672.2 Z" fill="url(#gStr)"/><path d="M1112.2,672.4 L1116.5,664.3 M1115.2,672.4 L1119.5,664.3 M1118.2,672.4 L1122.5,664.3" stroke="#2e2e2e" stroke-width="0.9"/>
<rect x="667" y="679" width="551" height="1" fill="#1f2226" />
<rect x="673.7" y="684.7" width="7.6" height="7.6" fill="none" stroke="#111" stroke-width="1.5"/><path d="M675.2,688.5 L679.8,688.5" stroke="#b9c3cc" stroke-width="1"/><path d="M677.5,680 L677.5,684 M681.5,688.5 L687,688.5" stroke="#111" stroke-width="1.2"/>
<rect x="693.2" y="682.2" width="4.8" height="2.2" fill="#5e3c10"/><path d="M695,684 L706,684 L706,693.8 L703,693.8 Z" fill="#6a4514"/><path d="M691.2,684.6 L704.6,684.6 L705.6,693.9 L693.3,693.9 Z" fill="#fde0c0"/>
<text transform="translate(711.59,692.80) scale(1.0800,1)" font-size="12.00" fill="#1e1204">Root</text>
<path d="M923.8,688.4 Q930.5,680.6 937.2,688.4 Q930.5,696.1999999999999 923.8,688.4 Z" fill="#c6a582"/><ellipse cx="930.5" cy="688.4" rx="2.7" ry="2.3" fill="#f7931e"/>
<rect x="1049.5" y="683.5" width="6.5" height="10" fill="#7f6040" stroke="#4a3418" stroke-width="1"/><path d="M1050,693 L1056,684 L1056,693 Z" fill="#9a7a58"/>
<rect x="1083.5" y="686.4000000000001" width="6.5" height="6.2" fill="#dcc0a0"/><rect x="1080.5" y="683.2" width="7.4" height="7" fill="#7a5a30"/><rect x="1080.5" y="683.2" width="6.5" height="6.1" fill="#dcc0a0"/>
<path d="M1107.5,693 L1112,683.5 L1124.5,683.5 L1120,693 Z" fill="#f3d2b0" stroke="#5a3a1a" stroke-width="0.8"/><path d="M1111,693 L1115,683.5 M1114,693 L1118,683.5 M1117,693 L1121,683.5" stroke="#a07040" stroke-width="0.9"/>
<path d="M697.5,696 L697.5,705.5 L706.5,705.5" fill="none" stroke="#111" stroke-width="1"/>
<path d="M711.4,710.7 C714,708 716,706.5 718,705.5 C720,704 722.5,701 724.3,698.9" fill="none" stroke="#a8a8a8" stroke-width="1.1"/><path d="M716,704 L723.5,702.8 M718,705.5 L714.8,712" stroke="#9a9a9a" stroke-width="0.9"/><rect x="716.6" y="704.2" width="2.8" height="2.8" fill="#bbb"/><circle cx="723.8" cy="699.5" r="1" fill="#bbb"/>
<text transform="translate(731.79,709.50) scale(1.0800,1)" font-size="12.00" fill="#d0d0d0">Bezier2</text>
<path d="M923.8,705.3 Q930.5,697.5 937.2,705.3 Q930.5,713.0999999999999 923.8,705.3 Z" fill="#c2c2c2"/><ellipse cx="930.5" cy="705.3" rx="2.7" ry="2.3" fill="#393939"/>
<rect x="987.0" y="699.0" width="11" height="11" fill="#ffffff" stroke="#000" stroke-width="1" rx="1"/><path d="M988.0,709.0 L997.0,700.0" stroke="#111" stroke-width="1.2"/>
<rect x="1017.5" y="698.5" width="11.5" height="11.5" fill="#fff" stroke="#000" stroke-width="1"/>
<rect x="1049.5" y="700.5" width="10" height="10" fill="#3a3a3a" stroke="#111" stroke-width="1"/><path d="M1050,710 L1059,701 L1059,710 Z" fill="#666"/>
<rect x="1084" y="703.7" width="6.5" height="6.2" fill="#d2d2d2"/><rect x="1081" y="700.5" width="7.4" height="7" fill="#393939"/><rect x="1081" y="700.5" width="6.5" height="6.1" fill="#d2d2d2"/>
<rect x="1114" y="701" width="4" height="9" fill="#c8c8c8" />
<text transform="translate(1134.60,709.70) scale(1.0800,1)" font-size="12.00" fill="#d0d0d0">all</text>
<text transform="translate(1167.00,709.70) scale(1.0800,1)" font-size="12.00" fill="#d0d0d0">color</text>
<rect x="666.5" y="805.5" width="45" height="19" rx="3" fill="url(#gBtn2)" stroke="#202020" stroke-width="1"/>
<rect x="688" y="806" width="1" height="18" fill="#202020" />
<path d="M677,810 L677,820 M672,815 L682,815" stroke="#bbb" stroke-width="2.4"/><path d="M695,815 L705,815" stroke="#bbb" stroke-width="2.4"/>
<rect x="1235" y="862" width="1" height="1" fill="#777" />
<rect x="1233" y="864" width="1" height="1" fill="#777" />
<rect x="1235" y="864" width="1" height="1" fill="#777" />
<rect x="1231" y="866" width="1" height="1" fill="#777" />
<rect x="1233" y="866" width="1" height="1" fill="#777" />
<rect x="1235" y="866" width="1" height="1" fill="#777" />
<rect x="1229" y="868" width="1" height="1" fill="#777" />
<rect x="1231" y="868" width="1" height="1" fill="#777" />
<rect x="1233" y="868" width="1" height="1" fill="#777" />
<rect x="1235" y="868" width="1" height="1" fill="#777" />
<rect x="657" y="493" width="510" height="126" fill="#000" opacity="0.22" filter="url(#blur3)"/>
<rect x="659" y="491" width="506" height="123" fill="#313131" />
<rect x="659" y="491" width="506" height="30" fill="#ffffff" />
<rect x="1145" y="498" width="19" height="19" fill="#e4e4e4" />
<path d="M1152,505.2 L1156.8,509.8 M1156.8,505.2 L1152,509.8" stroke="#f6f6f6" stroke-width="1.5"/>
<text transform="translate(666.29,509.80) scale(0.9661,1)" font-size="12.00" fill="#9c9c9c">Roto2.curves.translate.x</text>
<text transform="translate(669.79,548.10) scale(1.0800,1)" font-size="12.00" fill="#d0d0d0">Expression:</text>
<rect x="743.5" y="532.5" width="332" height="21" rx="3" fill="#3a3a3a" stroke="#252525" stroke-width="1"/>
<rect x="746" y="537" width="146" height="13" fill="#f7931e" />
<text transform="translate(745.69,547.70) scale(1.0800,1)" font-size="12.00" fill="#1a1a1a">parent.Tracker1.translate</text>
<text transform="translate(669.79,571.70) scale(1.0800,1)" font-size="12.00" fill="#d0d0d0">Result:</text>
<text transform="translate(743.60,571.70) scale(1.0800,1)" font-size="12.00" fill="#d0d0d0">0</text>
<rect x="1082.5" y="532.5" width="17" height="21" rx="3" fill="url(#gBtn2)" stroke="#1e1e1e" stroke-width="1"/>
<text transform="translate(1086.07,548.50)" font-size="12.00" fill="#d0d0d0">...</text>
<rect x="1106.5" y="532.5" width="17" height="21" rx="3" fill="url(#gBtn2)" stroke="#1e1e1e" stroke-width="1"/>
<text transform="translate(1107.53,548.50)" font-size="12.00" fill="#d0d0d0">Py</text>
<rect x="1130.5" y="532.5" width="17" height="21" rx="3" fill="url(#gBtn2)" stroke="#1e1e1e" stroke-width="1"/>
<text transform="translate(1134.41,548.50)" font-size="12.00" fill="#8a8a8a">R</text>
<rect x="988.5" y="580.5" width="79" height="22" rx="3" fill="url(#gBtn2)" stroke="#1c1c1c" stroke-width="1"/>
<text transform="translate(1018.76,596.10) scale(1.0400,1)" font-size="12.00" fill="#d8d8d8">OK</text>
<rect x="1074.5" y="580.5" width="79" height="22" rx="3" fill="url(#gBtn2)" stroke="#1c1c1c" stroke-width="1"/>
<text transform="translate(1094.69,596.10) scale(1.0400,1)" font-size="12.00" fill="#d8d8d8">Cancel</text>
<rect x="646" y="876" width="593" height="2" fill="#b784bf" />
<rect x="646" y="878" width="593" height="1" fill="#262626" />
</svg></body></html>
